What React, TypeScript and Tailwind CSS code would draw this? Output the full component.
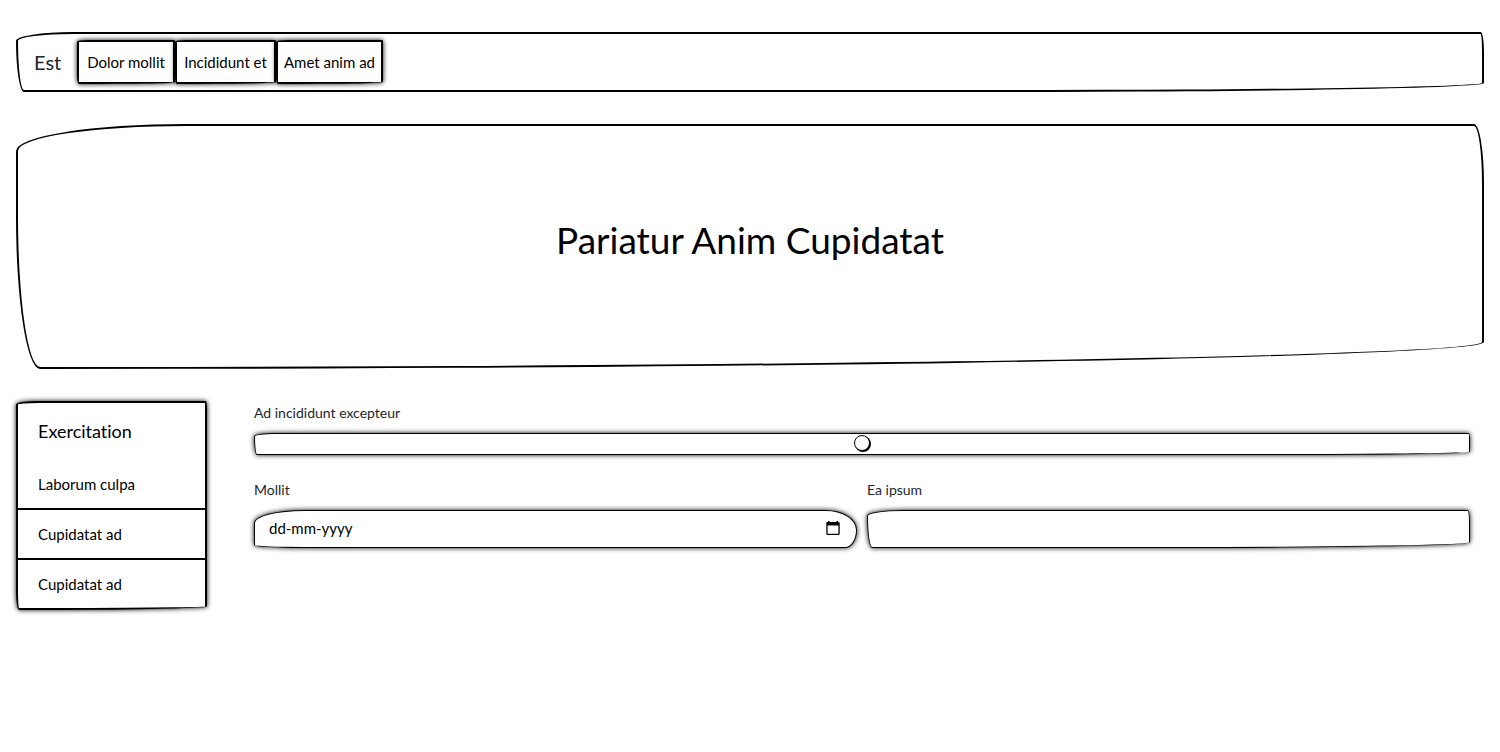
import { useState } from "react";

const sketch = "rounded-[170px_10px_1445px_24px/27px_60px_27px_153px] border-black";

const links = [
  { label: "Dolor mollit", width: "min-w-[98px]" },
  { label: "Incididunt et", width: "min-w-[101px]" },
  { label: "Amet anim ad", width: "min-w-[107px]" },
];

const items = ["Laborum culpa", "Cupidatat ad", "Cupidatat ad"];

function CalendarIcon() {
  return (
    <svg viewBox="0 0 14 15" className="h-[15px] w-[14px]" aria-hidden="true">
      <path
        fill="currentColor"
        fillRule="evenodd"
        d="M2 0h1.5v1h7V0H12v1h.5A1.2 1.2 0 0 1 13.7 2.2v10.6a1.2 1.2 0 0 1-1.2 1.2h-11A1.2 1.2 0 0 1 .3 12.8V2.2A1.2 1.2 0 0 1 1.5 1H2zM1.6 4.5v8.2h10.8V4.5z"
      />
    </svg>
  );
}

export default function App() {
  const [amount, setAmount] = useState(50);
  const [date, setDate] = useState("");
  const [text, setText] = useState("");

  return (
    <div className="px-4 py-8 font-['Lato',sans-serif] text-[15px] leading-6 text-[#212529] [font-variant-ligatures:none]">
      <nav className={`flex items-center border-2 px-4 py-1.5 ${sketch}`}>
        <a href="#home" className="w-[43px] text-xl leading-6">
          Est
        </a>
        <div className="flex">
          {links.map((link) => (
            <button
              key={link.label}
              type="button"
              className={`h-11 border-2 bg-white text-[15px] text-black shadow-[0_0_5px_#000] ${link.width} ${sketch}`}
            >
              {link.label}
            </button>
          ))}
        </div>
      </nav>

      <header className={`mt-8 flex items-center justify-center border-2 px-8 pt-[88px] pb-[102px] ${sketch}`}>
        <h1 className="text-[37px] leading-[51px] text-black">Pariatur Anim Cupidatat</h1>
      </header>

      <div className="mt-8 flex items-start">
        <aside className={`w-[191px] shrink-0 border-2 bg-white text-black shadow-[0_0_5px_#000] ${sketch}`}>
          <h2 className="px-5 pt-4 pb-[17px] text-lg leading-6">Exercitation</h2>
          <ul className="divide-y-2 divide-black">
            {items.map((item, index) => (
              <li key={index}>
                <a href="#section" className="block px-5 py-3">
                  {item}
                </a>
              </li>
            ))}
          </ul>
        </aside>

        <form className="ml-[47px] mr-3.5 min-w-0 grow text-sm leading-6">
          <label htmlFor="amount" className="block">
            Ad incididunt excepteur
          </label>
          <input
            id="amount"
            type="range"
            value={amount}
            onChange={(event) => setAmount(Number(event.target.value))}
            className={`mt-2 block h-[22px] w-full appearance-none border bg-white pb-0.5 shadow-[0_0_5px_#000] [&::-webkit-slider-thumb]:size-4 [&::-webkit-slider-thumb]:appearance-none [&::-webkit-slider-thumb]:rounded-full [&::-webkit-slider-thumb]:border [&::-webkit-slider-thumb]:border-solid [&::-webkit-slider-thumb]:border-black [&::-webkit-slider-thumb]:bg-white [&::-webkit-slider-thumb]:shadow-[1px_1px_0_#000] ${sketch}`}
          />
          <div className="mt-[23px] grid grid-cols-2 gap-2.5">
            <div>
              <label htmlFor="date" className="block">
                Mollit
              </label>
              <div className="mt-2 flex h-[38px] items-center rounded-[50px_31px_12px_50px/13px_20px_18px_3px] border border-black bg-white pr-4 pb-0.5 pl-3.5 text-black shadow-[0_0_5px_#000]">
                <input
                  id="date"
                  type="text"
                  value={date}
                  placeholder="dd-mm-yyyy"
                  onChange={(event) => setDate(event.target.value)}
                  className="min-w-0 grow bg-transparent text-[15px] outline-none placeholder:text-black"
                />
                <button type="button" aria-label="Open calendar">
                  <CalendarIcon />
                </button>
              </div>
            </div>
            <div>
              <label htmlFor="text" className="block">
                Ea ipsum
              </label>
              <input
                id="text"
                type="text"
                value={text}
                onChange={(event) => setText(event.target.value)}
                className={`mt-2 block h-[38px] w-full border bg-white px-3 text-[15px] text-black shadow-[0_0_5px_#000] outline-none ${sketch}`}
              />
            </div>
          </div>
        </form>
      </div>
    </div>
  );
}
